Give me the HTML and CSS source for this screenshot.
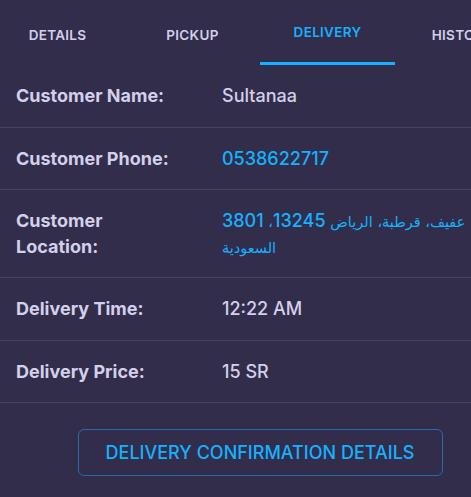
FILE: index.html
```html
<!DOCTYPE html>
<html>
<head>
<meta charset="utf-8">
<link rel="stylesheet" href="styles.css">
</head>
<body>
<div class="card">
  <div class="tabs">
    <div class="tab">Details</div>
    <div class="tab">Pickup</div>
    <div class="tab active">Delivery</div>
    <div class="tab">History</div>
  </div>
  <div class="rows">
    <div class="row">
      <div class="label">Customer Name:</div>
      <div class="value">Sultanaa</div>
    </div>
    <div class="row">
      <div class="label">Customer Phone:</div>
      <div class="value link">0538622717</div>
    </div>
    <div class="row">
      <div class="label">Customer<br>Location:</div>
      <div class="value link"><span class="ar">عفيف، قرطبة، الرياض</span> 13245<span class="ar">، </span>3801<br><span class="ar">السعودية</span></div>
    </div>
    <div class="row">
      <div class="label">Delivery Time:</div>
      <div class="value">12:22 AM</div>
    </div>
    <div class="row">
      <div class="label">Delivery Price:</div>
      <div class="value">15 SR</div>
    </div>
  </div>
  <div class="actions">
    <button class="btn">Delivery Confirmation Details</button>
  </div>
</div>
</body>
</html>
```
FILE: styles.css
```css
html, body {
  margin: 0;
  padding: 0;
  background: #312d4b;
  overflow: hidden;
}
body {
  font-family: Inter, "DejaVu Sans", sans-serif;
  color: #d4d0ea;
}
.card {
  width: 540px;
  margin-left: -10px;
}
.tabs {
  display: flex;
  height: 65px;
}
.tab {
  flex: 1;
  display: flex;
  align-items: center;
  justify-content: center;
  text-transform: uppercase;
  font-size: 13.5px;
  font-weight: 600;
  letter-spacing: 0.3px;
  color: #d4d0ea;
  box-sizing: border-box;
  padding-top: 4px;
}
.tab.active {
  color: #16b1ff;
  border-bottom: 3px solid #16b1ff;
  padding-top: 1px;
}
.row {
  display: grid;
  grid-template-columns: 206px 1fr;
  padding: 18px 26px;
  border-bottom: 1px solid #48445f;
  font-size: 18px;
  line-height: 25.5px;
}
.label {
  font-weight: 700;
}
.value {
  font-weight: 500;
}
.link {
  color: #16b1ff;
}
.ar {
  font-family: "DejaVu Sans", sans-serif;
  font-size: 14.5px;
  font-weight: 400;
  line-height: 1;
}
.actions {
  display: flex;
  justify-content: center;
  padding-top: 26px;
}
.btn {
  width: 365px;
  height: 47px;
  background: transparent;
  border: 1px solid rgba(22, 177, 255, 0.5);
  border-radius: 6px;
  color: #16b1ff;
  font-family: Inter, sans-serif;
  font-size: 18px;
  font-weight: 500;
  text-transform: uppercase;
  letter-spacing: 0;
}
```
